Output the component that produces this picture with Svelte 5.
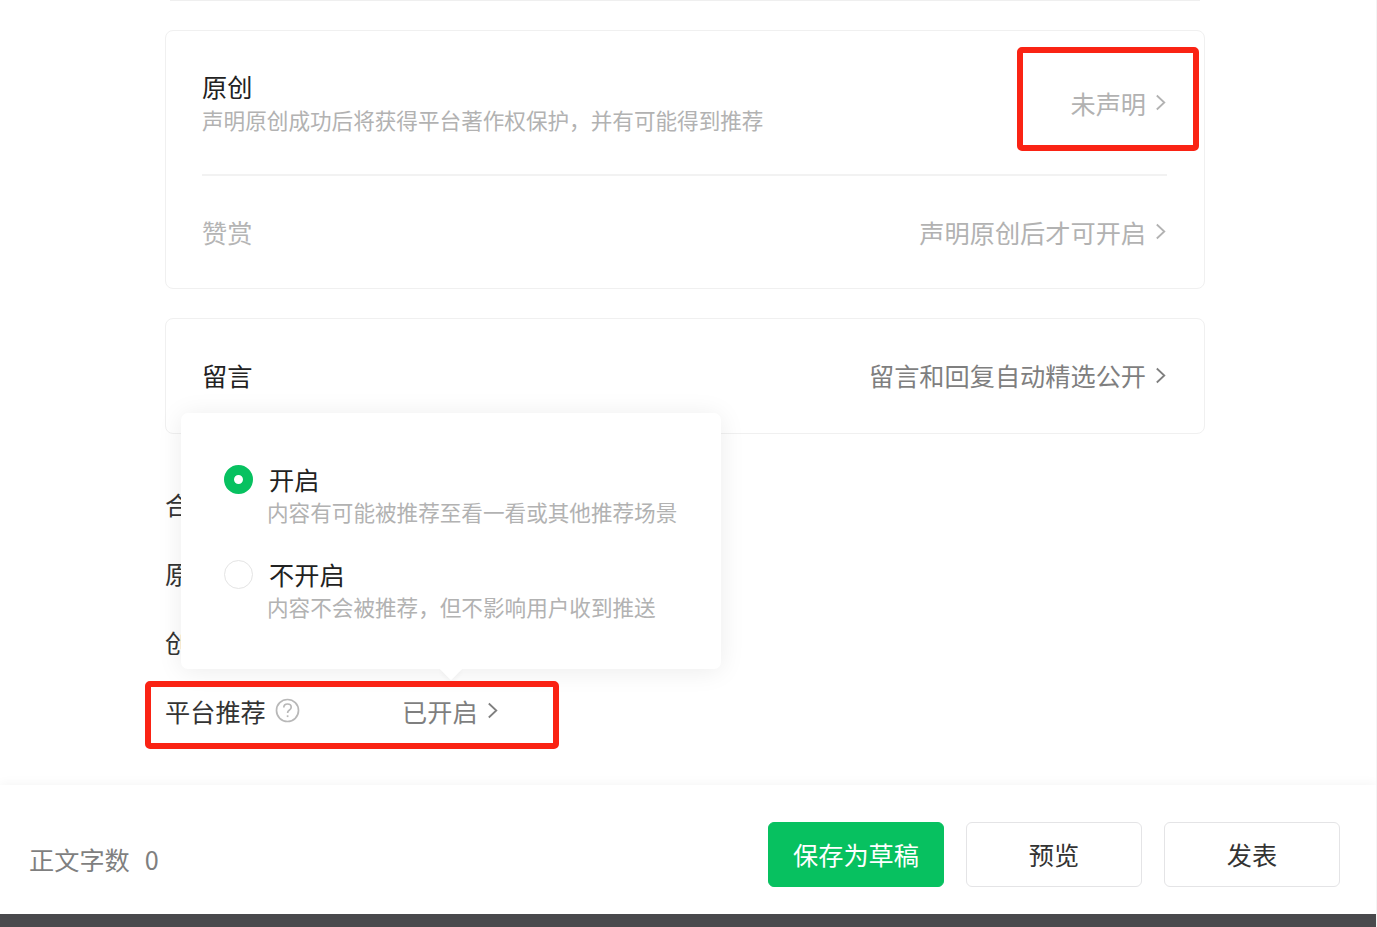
<script>
  const settings = [
    { label: '合集', value: '' },
    { label: '原文链接', value: '' },
    { label: '创作来源', value: '' }
  ];

  const options = [
    { title: '开启', desc: '内容有可能被推荐至看一看或其他推荐场景', checked: true },
    { title: '不开启', desc: '内容不会被推荐，但不影响用户收到推送', checked: false }
  ];
</script>

{#snippet chevron()}
  <svg class="chevron" width="10" height="17" viewBox="0 0 10 17">
    <polyline points="0.8,1.5 8.3,8.5 0.8,15.5" />
  </svg>
{/snippet}

<div class="page">
  <main class="main">
    <div class="content">
      <div class="topline"></div>

      <section class="card">
        <div class="row original">
          <div>
            <div class="title">原创</div>
            <div class="desc">声明原创成功后将获得平台著作权保护，并有可能得到推荐</div>
          </div>
          <div class="value muted">未声明 {@render chevron()}</div>
        </div>
        <div class="divider"></div>
        <div class="row reward">
          <div class="title disabled">赞赏</div>
          <div class="value muted">声明原创后才可开启 {@render chevron()}</div>
        </div>
      </section>

      <section class="card comments">
        <div class="row">
          <div class="title">留言</div>
          <div class="value">留言和回复自动精选公开 {@render chevron()}</div>
        </div>
      </section>

      <div class="settings">
        {#each settings as item}
          <div class="setting">{item.label}</div>
        {/each}
        <div class="setting recommend">
          <span class="setting-label">平台推荐
            <svg class="help" width="25" height="25" viewBox="0 0 25 25">
              <circle cx="12.5" cy="12.5" r="11" />
              <path d="M8.8 9.6c0-2.2 1.6-3.6 3.7-3.6s3.7 1.3 3.7 3.2c0 1.5-.8 2.3-2 3.1-1.1.7-1.6 1.3-1.6 2.6" />
              <path d="M12.6 17.3v1.8" />
            </svg>
          </span>
          <span class="value">已开启 {@render chevron()}</span>
        </div>
      </div>
    </div>

    <div class="popover">
      {#each options as option}
        <div class="option">
          <span class="radio" class:checked={option.checked}></span>
          <div class="option-text">
            <div class="title">{option.title}</div>
            <div class="option-desc">{option.desc}</div>
          </div>
        </div>
      {/each}
    </div>

    <div class="mark mark-original"></div>
    <div class="mark mark-recommend"></div>
  </main>

  <footer class="footer">
    <div class="count">正文字数<span class="count-num">0</span></div>
    <div class="actions">
      <button class="btn primary">保存为草稿</button>
      <button class="btn">预览</button>
      <button class="btn">发表</button>
    </div>
  </footer>
  <div class="bottom-bar"></div>
</div>

<style>
  :global(body) {
    margin: 0;
    background: #fff;
  }

  .page {
    height: 927px;
    display: flex;
    flex-direction: column;
    overflow: hidden;
    font-family: "Noto Sans CJK SC", "Noto Sans", sans-serif;
    font-size: 25.2px;
    color: #333;
    border-right: 1px solid #f4f4f4;
    box-sizing: border-box;
  }

  .main {
    position: relative;
    height: 785px;
    flex: none;
  }

  .content {
    width: 1040px;
    margin-left: 165px;
  }

  .topline {
    height: 1px;
    margin: 0 5px 29px;
    background: #efefef;
  }

  .card {
    border: 1px solid #f0f0f0;
    border-radius: 8px;
    box-sizing: border-box;
    height: 259px;
    padding: 0 38px 0 36px;
  }

  .comments {
    height: 116px;
    margin-top: 29px;
  }

  .row {
    display: flex;
    justify-content: space-between;
    align-items: center;
  }

  .original {
    height: 143px;
  }

  .reward {
    height: 112px;
  }

  .comments .row {
    height: 112px;
  }

  .comments .chevron {
    margin-top: 1px;
  }

  .divider {
    height: 2px;
    margin-right: -1px;
    background: #f2f2f2;
  }

  .title {
    line-height: 34px;
    color: #222;
  }

  .title.disabled {
    color: #b5b5b5;
  }

  .desc {
    font-size: 21.6px;
    line-height: 34px;
    color: #b2b2b2;
    white-space: nowrap;
  }

  .value {
    display: inline-flex;
    align-items: center;
    gap: 10px;
    line-height: 34px;
    color: #7f7f7f;
    white-space: nowrap;
  }

  .value.muted {
    color: #b2b2b2;
  }

  .chevron {
    margin-top: -1px;
  }

  .chevron polyline {
    fill: none;
    stroke: currentColor;
    stroke-width: 1.8;
  }

  .settings {
    margin-top: 35px;
  }

  .setting {
    height: 69px;
    display: flex;
    align-items: center;
    color: #333;
  }

  .recommend {
    height: 70px;
  }

  .setting-label {
    display: inline-flex;
    align-items: center;
    gap: 9px;
    width: 237px;
  }

  .help {
    margin-top: -2px;
    fill: none;
    stroke: #b8b8b8;
    stroke-width: 1.7;
  }

  .popover {
    position: absolute;
    left: 181px;
    top: 413px;
    width: 540px;
    height: 256px;
    box-sizing: border-box;
    padding: 48px 43px 0;
    background: #fff;
    border-radius: 7px;
    box-shadow: 0 2px 26px rgba(0, 0, 0, 0.08);
    display: flex;
    flex-direction: column;
    gap: 27px;
  }

  .popover::after {
    content: "";
    position: absolute;
    left: 259px;
    bottom: -11px;
    width: 22px;
    height: 22px;
    background: #fff;
    transform: rotate(45deg) scale(0.72);
    box-shadow: 3px 3px 6px rgba(0, 0, 0, 0.03);
  }

  .option {
    display: flex;
    gap: 15px;
    height: 68px;
  }

  .radio {
    width: 29px;
    height: 29px;
    flex: none;
    margin-top: 4px;
    box-sizing: border-box;
    border: 1px solid #e4e4e4;
    border-radius: 50%;
    background: #fff;
  }

  .radio.checked {
    border: 10px solid #07c160;
  }

  .option-text .title {
    margin-top: 2px;
    margin-left: 1px;
    line-height: 33px;
  }

  .option-desc {
    font-size: 21.6px;
    line-height: 31px;
    color: #b2b2b2;
    white-space: nowrap;
    margin-left: -1px;
  }

  .mark {
    position: absolute;
    box-sizing: border-box;
    border: 6px solid #fa2314;
    border-radius: 5px;
  }

  .mark-original {
    left: 1017px;
    top: 47px;
    width: 182px;
    height: 104px;
  }

  .mark-recommend {
    left: 145px;
    top: 681px;
    width: 414px;
    height: 68px;
  }

  .footer {
    flex: 1;
    position: relative;
    display: flex;
    align-items: center;
    justify-content: space-between;
    padding: 10px 36px 0 29px;
    background: #fff;
    box-shadow: 0 -2px 10px rgba(0, 0, 0, 0.04);
  }

  .count {
    color: #7f7f7f;
    margin-top: 9px;
  }

  .count-num {
    margin-left: 15px;
  }

  .actions {
    display: flex;
    gap: 22px;
  }

  .btn {
    width: 176px;
    height: 65px;
    border: 1px solid #e4e4e6;
    border-radius: 6px;
    background: #fff;
    color: #333;
    font: inherit;
    padding: 0 0 2px;
  }

  .btn.primary {
    background: #07c160;
    border-color: #07c160;
    color: #fff;
  }

  .bottom-bar {
    height: 13px;
    flex: none;
    background: #4a4a4d;
  }
</style>
